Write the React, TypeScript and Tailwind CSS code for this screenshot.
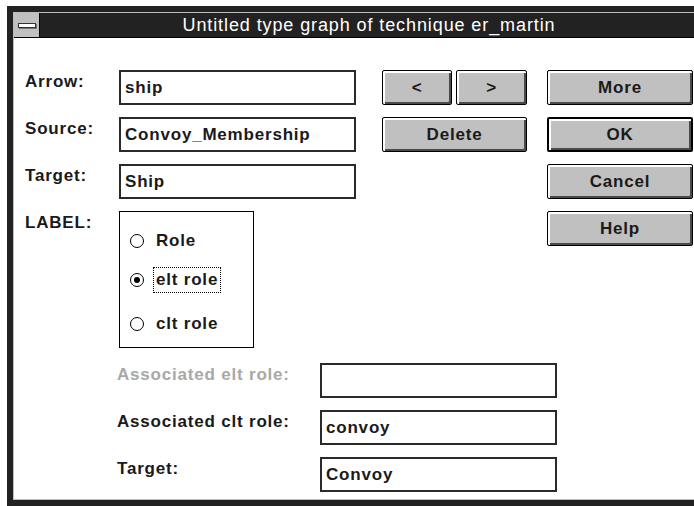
import React from "react";

const font = { fontFamily: '"Liberation Sans", Arial, sans-serif' };

function Field({ value }: { value?: string }) {
  return (
    <div className="h-[35px] w-[237px] border-2 border-[#2a2a2a] bg-white flex items-center pl-[4px] text-[17px] font-bold tracking-[0.8px] text-[#1a1a1a] leading-none">
      {value}
    </div>
  );
}

function Btn({ label, w, def }: { label: string; w: string; def?: boolean }) {
  return (
    <div
      className={`${w} h-[35px] bg-[#c0c0c0] rounded-[2px] flex items-center justify-center text-[17px] font-bold tracking-[0.8px] text-[#1a1a1a] leading-none ${
        def ? "border-2 border-black" : "border border-black"
      } shadow-[inset_2px_2px_0_#ffffff,inset_-2px_-2px_0_#4a4a4a]`}
    >
      {label}
    </div>
  );
}

function Label({ text, gray }: { text: string; gray?: boolean }) {
  return (
    <div
      className={`pt-[2px] leading-[20px] text-[17px] font-bold tracking-[0.8px] ${
        gray ? "text-[#a8a8a8]" : "text-[#1a1a1a]"
      }`}
    >
      {text}
    </div>
  );
}

function Radio({ checked }: { checked?: boolean }) {
  return (
    <div className="w-[14px] h-[14px] rounded-full border border-black bg-white flex items-center justify-center shrink-0">
      {checked && <div className="w-[6px] h-[6px] rounded-full bg-black" />}
    </div>
  );
}

export default function App() {
  return (
    <div className="w-[694px] h-[506px] overflow-hidden bg-white" style={font}>
      <div className="ml-[7px] mt-[6px] w-[724px] h-[500px] bg-[#222222] p-[6px]">
        <div className="w-full h-full border border-[#bdbdbd] flex flex-col">
          {/* Title bar */}
          <div className="h-[25px] bg-[#222222] border-b border-black flex shrink-0">
            <div className="w-[26px] h-full bg-[#c0c0c0] border-r border-black flex items-center justify-center">
              <div className="w-[18px] h-[5px] bg-white border border-[#333] shadow-[1px_1px_0_#777]" />
            </div>
            <div className="flex-1 flex items-center justify-center pr-[26px] text-white text-[18px] tracking-[0.9px] leading-none">
              Untitled type graph of technique er_martin
            </div>
          </div>

          {/* Content */}
          <div className="flex-1 bg-white flex flex-col pt-[32px]">
            <div className="flex">
              {/* Left block */}
              <div className="pl-[11px] grid grid-cols-[94px_237px] gap-y-[12px] auto-rows-min">
                <Label text="Arrow:" />
                <Field value="ship" />
                <Label text="Source:" />
                <Field value="Convoy_Membership" />
                <Label text="Target:" />
                <Field value="Ship" />
                <Label text="LABEL:" />
                <div className="w-[135px] h-[137px] border border-black flex flex-col pl-[10px] pt-[16px] text-[17px] font-bold tracking-[0.8px] text-[#1a1a1a]">
                  <div className="h-[26px] flex items-center">
                    <Radio />
                    <span className="ml-[12px]">Role</span>
                  </div>
                  <div className="h-[26px] mt-[13px] flex items-center">
                    <Radio checked />
                    <span className="ml-[9px] h-[26px] px-[2px] border border-dotted border-black flex items-center">
                      elt role
                    </span>
                  </div>
                  <div className="h-[26px] mt-[18px] flex items-center">
                    <Radio />
                    <span className="ml-[12px]">clt role</span>
                  </div>
                </div>
              </div>

              {/* Middle buttons */}
              <div className="ml-[26px] flex flex-col gap-[12px] w-[145px]">
                <div className="flex gap-[4px]">
                  <Btn label="<" w="w-[70px]" />
                  <Btn label=">" w="w-[71px]" />
                </div>
                <Btn label="Delete" w="w-[145px]" />
              </div>

              {/* Right buttons */}
              <div className="ml-[20px] flex flex-col gap-[12px] w-[146px]">
                <Btn label="More" w="w-[146px]" />
                <Btn label="OK" w="w-[146px]" def />
                <Btn label="Cancel" w="w-[146px]" />
                <Btn label="Help" w="w-[146px]" />
              </div>
            </div>

            {/* Bottom block */}
            <div className="mt-[15px] pl-[103px] grid grid-cols-[203px_237px] gap-y-[12px] auto-rows-min">
              <Label text="Associated elt role:" gray />
              <Field />
              <Label text="Associated clt role:" />
              <Field value="convoy" />
              <Label text="Target:" />
              <Field value="Convoy" />
            </div>
          </div>
        </div>
      </div>
    </div>
  );
}
